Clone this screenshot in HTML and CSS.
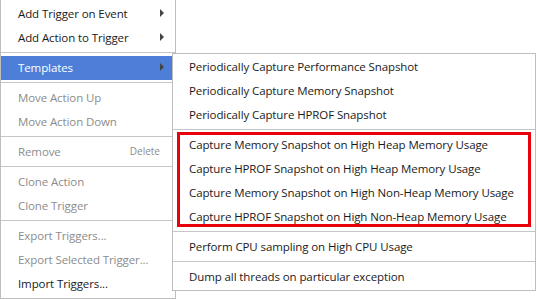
FILE: index.html
```html
<!DOCTYPE html>
<html lang="en">
<head>
    <meta charset="UTF-8">
    <meta name="viewport" content="width=device-width, initial-scale=1.0">
    <title>Triggers Menu</title>
    <link rel="stylesheet" href="styles.css">
</head>
<body>
    <div class="page">
        <div class="menu main-menu">
            <div class="item">Add Trigger on Event <span class="arrow"></span></div>
            <div class="item">Add Action to Trigger <span class="arrow"></span></div>
            <div class="separator"></div>
            <div class="item active">Templates <span class="arrow"></span></div>
            <div class="separator"></div>
            <div class="item disabled">Move Action Up</div>
            <div class="item disabled">Move Action Down</div>
            <div class="separator"></div>
            <div class="item disabled">Remove <span class="shortcut">Delete</span></div>
            <div class="separator"></div>
            <div class="item disabled">Clone Action</div>
            <div class="item disabled">Clone Trigger</div>
            <div class="separator"></div>
            <div class="item disabled">Export Triggers...</div>
            <div class="item disabled">Export Selected Trigger...</div>
            <div class="item">Import Triggers...</div>
        </div>

        <div class="menu submenu">
            <div class="item">Periodically Capture Performance Snapshot</div>
            <div class="item">Periodically Capture Memory Snapshot</div>
            <div class="item">Periodically Capture HPROF Snapshot</div>
            <div class="separator"></div>
            <div class="marked">
                <div class="item">Capture Memory Snapshot on High Heap Memory Usage</div>
                <div class="item">Capture HPROF Snapshot on High Heap Memory Usage</div>
                <div class="item">Capture Memory Snapshot on High Non-Heap Memory Usage</div>
                <div class="item">Capture HPROF Snapshot on High Non-Heap Memory Usage</div>
            </div>
            <div class="separator"></div>
            <div class="item">Perform CPU sampling on High CPU Usage</div>
            <div class="separator"></div>
            <div class="item">Dump all threads on particular exception</div>
        </div>
    </div>
</body>
</html>
```

FILE: styles.css
```css
* {
    margin: 0;
    padding: 0;
    box-sizing: border-box;
}

body {
    font-family: "Open Sans", "Noto Sans", sans-serif;
    font-size: 11.5px;
    letter-spacing: -0.1px;
    color: #1a1a1a;
    background-color: #fff;
}

.page {
    position: relative;
    width: 537px;
    height: 299px;
}

.menu {
    background-color: #fff;
    border: 1px solid #bdbdbd;
}

.main-menu {
    width: 176px;
    border-top: none;
    padding: 2px 0 2px;
}

.item {
    height: 24px;
    display: flex;
    align-items: center;
    justify-content: space-between;
    padding: 0 11px 2px 17px;
    white-space: nowrap;
}

.item.active {
    background-color: #4d7fd9;
    color: #fff;
}

.item.disabled {
    color: #8c8c8c;
}

.arrow {
    width: 0;
    height: 0;
    border-left: 4px solid #444;
    border-top: 4px solid transparent;
    border-bottom: 4px solid transparent;
}

.shortcut {
    font-size: 10px;
    letter-spacing: 0;
    color: #8c8c8c;
    padding-right: 4px;
}

.separator {
    height: 1px;
    background-color: #c6c6c6;
    margin: 2px 0 3px;
}

.submenu {
    position: absolute;
    left: 172px;
    top: 53px;
    width: 364px;
    padding: 1px 0 1px;
}

.submenu .item {
    padding-left: 16px;
}

.marked {
    position: relative;
}

.marked::after {
    content: "";
    position: absolute;
    top: -1px;
    bottom: 2px;
    left: 4px;
    right: 4px;
    border: 3px solid #e8000b;
}
```
